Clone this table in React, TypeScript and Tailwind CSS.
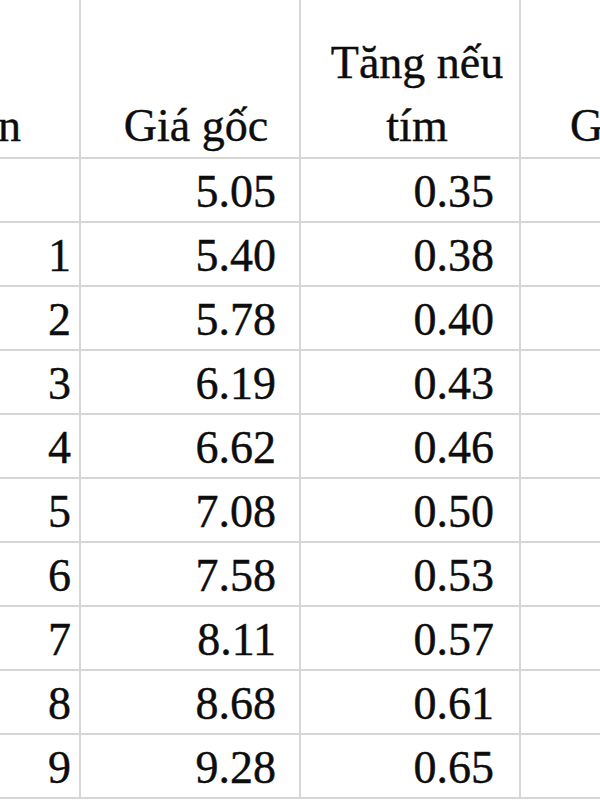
import React from "react";

const rows: [string, string, string][] = [
  ["", "5.05", "0.35"],
  ["1", "5.40", "0.38"],
  ["2", "5.78", "0.40"],
  ["3", "6.19", "0.43"],
  ["4", "6.62", "0.46"],
  ["5", "7.08", "0.50"],
  ["6", "7.58", "0.53"],
  ["7", "8.11", "0.57"],
  ["8", "8.68", "0.61"],
  ["9", "9.28", "0.65"],
];

export default function App() {
  return (
    <div className="w-[600px] h-[800px] overflow-hidden bg-white text-[#0d0d0d] [-webkit-text-stroke:0.4px_#0d0d0d] text-[46px] font-['Liberation_Serif','DejaVu_Serif',serif]">
      <div className="grid grid-cols-[81px_220px_220px_79px]">
        {/* header */}
        <div className="h-[159px] border-r-2 border-b-2 border-[#d6d6d6] flex items-end justify-end overflow-hidden pr-[58px] leading-[63px] whitespace-nowrap">
          Số lần
        </div>
        <div className="h-[159px] border-r-2 border-b-2 border-[#d6d6d6] flex items-end justify-center pl-[12px] leading-[63px] text-center whitespace-nowrap">
          Giá gốc
        </div>
        <div className="h-[159px] border-r-2 border-b-2 border-[#d6d6d6] flex items-end justify-center pl-[14px] leading-[63px] text-center">
          <span>
            Tăng nếu
            <br />
            tím
          </span>
        </div>
        <div className="h-[159px] border-b-2 border-[#d6d6d6] flex items-end overflow-hidden pl-[49px] leading-[63px] whitespace-nowrap">
          Giá bán
        </div>

        {rows.map((r, i) => (
          <React.Fragment key={i}>
            <div className="h-[64px] border-r-2 border-b-2 border-[#d6d6d6] flex items-end justify-end pr-[8px] pb-[6px] leading-[46px]">
              {r[0]}
            </div>
            <div className="h-[64px] border-r-2 border-b-2 border-[#d6d6d6] flex items-end justify-end pr-[23px] pb-[6px] leading-[46px]">
              {r[1]}
            </div>
            <div className="h-[64px] border-r-2 border-b-2 border-[#d6d6d6] flex items-end justify-end pr-[25px] pb-[6px] leading-[46px]">
              {r[2]}
            </div>
            <div className="h-[64px] border-b-2 border-[#d6d6d6]"></div>
          </React.Fragment>
        ))}
      </div>
    </div>
  );
}
